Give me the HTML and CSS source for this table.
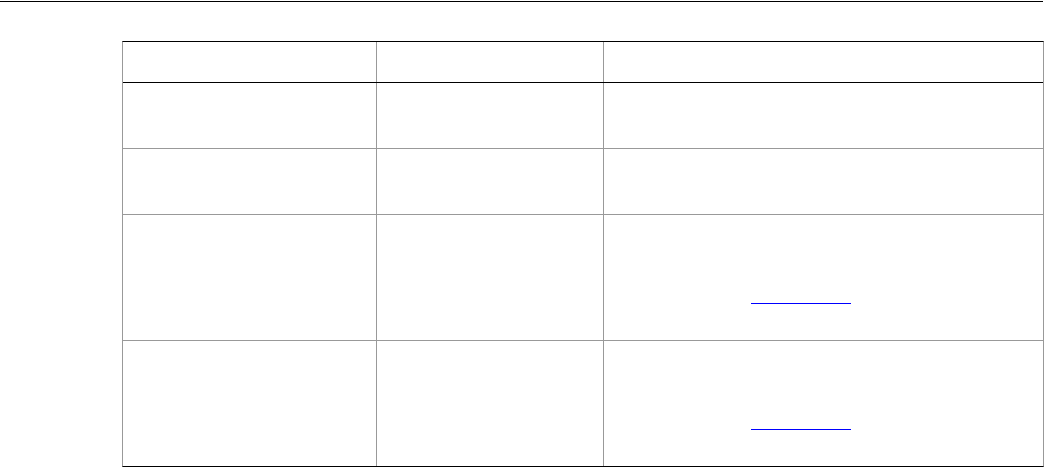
FILE: index.html
```html
<!DOCTYPE html>
<html>
<head>
<meta charset="utf-8">
<link rel="stylesheet" href="styles.css">
</head>
<body>
<div class="page">
  <div class="rule"></div>
  <div class="table">
    <div class="row head">
      <div class="cell"></div>
      <div class="cell"></div>
      <div class="cell"></div>
    </div>
    <div class="row short">
      <div class="cell"></div>
      <div class="cell"></div>
      <div class="cell"></div>
    </div>
    <div class="row short">
      <div class="cell"></div>
      <div class="cell"></div>
      <div class="cell"></div>
    </div>
    <div class="row tall">
      <div class="cell"></div>
      <div class="cell"></div>
      <div class="cell linkcell"><a class="link" href="#"></a></div>
    </div>
    <div class="row tall last">
      <div class="cell"></div>
      <div class="cell"></div>
      <div class="cell linkcell"><a class="link" href="#"></a></div>
    </div>
  </div>
</div>
</body>
</html>
```

FILE: styles.css
```css
html, body {
  margin: 0;
  padding: 0;
  background: #fff;
  font-family: "Liberation Sans", Arial, sans-serif;
}

.page {
  padding-top: 1px;
}

.rule {
  width: 1043px;
  height: 1px;
  background: #000;
}

.table {
  margin: 39px 0 0 122px;
  width: 922px;
  box-sizing: border-box;
  border-top: 1px solid #000;
  border-bottom: 1px solid #000;
  border-left: 1px solid #999;
  border-right: 1px solid #999;
}

.row {
  display: grid;
  grid-template-columns: 254px 227px 439px;
  box-sizing: border-box;
  border-bottom: 1px solid #999;
}

.row.head {
  height: 41px;
  border-bottom-color: #000;
}

.row.short {
  height: 66px;
}

.row.tall {
  height: 126px;
}

.row.last {
  height: 125px;
  border-bottom: none;
}

.cell {
  box-sizing: border-box;
  border-right: 1px solid #999;
}

.cell:last-child {
  border-right: none;
}

.linkcell {
  padding: 88px 0 0 147px;
}

.link {
  display: block;
  width: 100px;
  height: 1px;
  background-color: #0000ff;
}
```
